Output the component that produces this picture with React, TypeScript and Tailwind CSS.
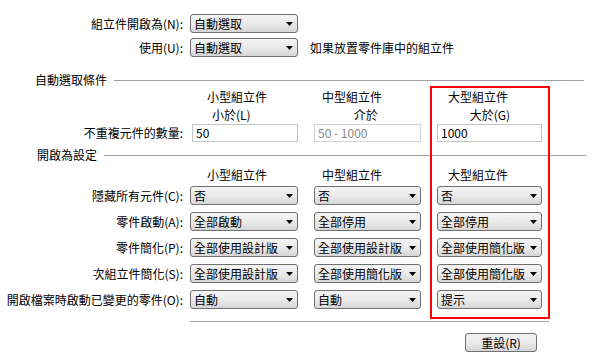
import React from 'react'

const labelCls = 'w-[183px] text-right shrink-0 whitespace-nowrap'

function Select({ value, className = '' }: { value: string; className?: string }) {
  return (
    <div
      className={`h-[19px] flex items-center justify-between rounded-[3px] border border-[#707070] bg-gradient-to-b from-[#f4f4f4] via-[#ebebeb] to-[#d6d6d6] pl-[3px] pr-[4px] ${className}`}
    >
      <span className="leading-[17px] whitespace-nowrap">{value}</span>
      <svg width="7" height="4" viewBox="0 0 7 4" className="shrink-0">
        <path d="M0 0h7L3.5 4z" fill="#000" />
      </svg>
    </div>
  )
}

function Input({ value, disabled }: { value: string; disabled?: boolean }) {
  return (
    <div
      className={`h-[18px] flex items-center border bg-white pl-[3px] leading-[16px] ${
        disabled ? 'border-[#d4d4d4] text-[#8a8a8a]' : 'border-[#c4c4c4] text-black'
      }`}
    >
      {value}
    </div>
  )
}

function Section({ title }: { title: string }) {
  return (
    <div className="flex items-center h-[14px] w-[549px]">
      <span className="leading-[14px] whitespace-nowrap">{title}</span>
      <div className="flex-1 h-px bg-[#a0a0a0] ml-[7px]" />
    </div>
  )
}

function SizeHeaders() {
  return (
    <div className="flex h-[14px] leading-[14px]">
      <span className="ml-[207px]">小型組立件</span>
      <span className="ml-[55px]">中型組立件</span>
      <span className="ml-[66px]">大型組立件</span>
    </div>
  )
}

const rows: [string, string, string, string][] = [
  ['隱藏所有元件(C):', '否', '否', '否'],
  ['零件啟動(A):', '全部啟動', '全部停用', '全部停用'],
  ['零件簡化(P):', '全部使用設計版', '全部使用設計版', '全部使用簡化版'],
  ['次組立件簡化(S):', '全部使用設計版', '全部使用簡化版', '全部使用簡化版'],
  ['開啟檔案時啟動已變更的零件(O):', '自動', '自動', '提示'],
]

export default function App() {
  return (
    <div className="relative w-[603px] h-[362px] bg-white text-black text-[12px] font-['Noto_Sans_CJK_TC','Liberation_Sans',sans-serif] overflow-hidden">
      <div className="flex flex-col pt-[14px]">
        <div className="flex items-center">
          <span className={labelCls}>組立件開啟為(N):</span>
          <Select value="自動選取" className="ml-[7px] w-[108px]" />
        </div>
        <div className="flex items-center mt-[5px]">
          <span className={labelCls}>使用(U):</span>
          <Select value="自動選取" className="ml-[7px] w-[108px]" />
          <span className="ml-[12px]">如果放置零件庫中的組立件</span>
        </div>

        <div className="mt-[16px] pl-[35px]">
          <Section title="自動選取條件" />
        </div>
        <div className="mt-[3px]">
          <SizeHeaders />
        </div>
        <div className="flex h-[14px] leading-[14px] mt-[4px]">
          <span className="ml-[212px]">小於(L)</span>
          <span className="ml-[103px]">介於</span>
          <span className="ml-[92px]">大於(G)</span>
        </div>
        <div className="flex items-center mt-[2px]">
          <span className={labelCls}>不重複元件的數量:</span>
          <div className="ml-[9px] w-[106px]">
            <Input value="50" />
          </div>
          <div className="ml-[16px] w-[107px]">
            <Input value="50 - 1000" disabled />
          </div>
          <div className="ml-[16px] w-[105px]">
            <Input value="1000" />
          </div>
        </div>

        <div className="mt-[6px] pl-[37px]">
          <Section title="開啟為設定" />
        </div>
        <div className="mt-[6px]">
          <SizeHeaders />
        </div>

        <div className="flex flex-col gap-[7px] mt-[4px]">
          {rows.map(([label, a, b, c]) => (
            <div key={label} className="flex items-center">
              <span className={labelCls}>{label}</span>
              <Select value={a} className="ml-[7px] w-[108px]" />
              <Select value={b} className="ml-[16px] w-[107px]" />
              <Select value={c} className="ml-[16px] w-[105px]" />
            </div>
          ))}
        </div>

        <div className="ml-[190px] w-[359px] h-px bg-[#a0a0a0] mt-[12px]" />

        <div className="flex mt-[11px]">
          <button className="ml-[465px] w-[72px] h-[19px] rounded-[3px] border border-[#707070] bg-gradient-to-b from-[#f4f4f4] via-[#ebebeb] to-[#d6d6d6] leading-[17px] text-[12px]">
            重設(R)
          </button>
        </div>
      </div>

      <div className="absolute left-[430px] top-[86px] w-[120px] h-[233px] border-2 border-[#ff0000] pointer-events-none" />
    </div>
  )
}
